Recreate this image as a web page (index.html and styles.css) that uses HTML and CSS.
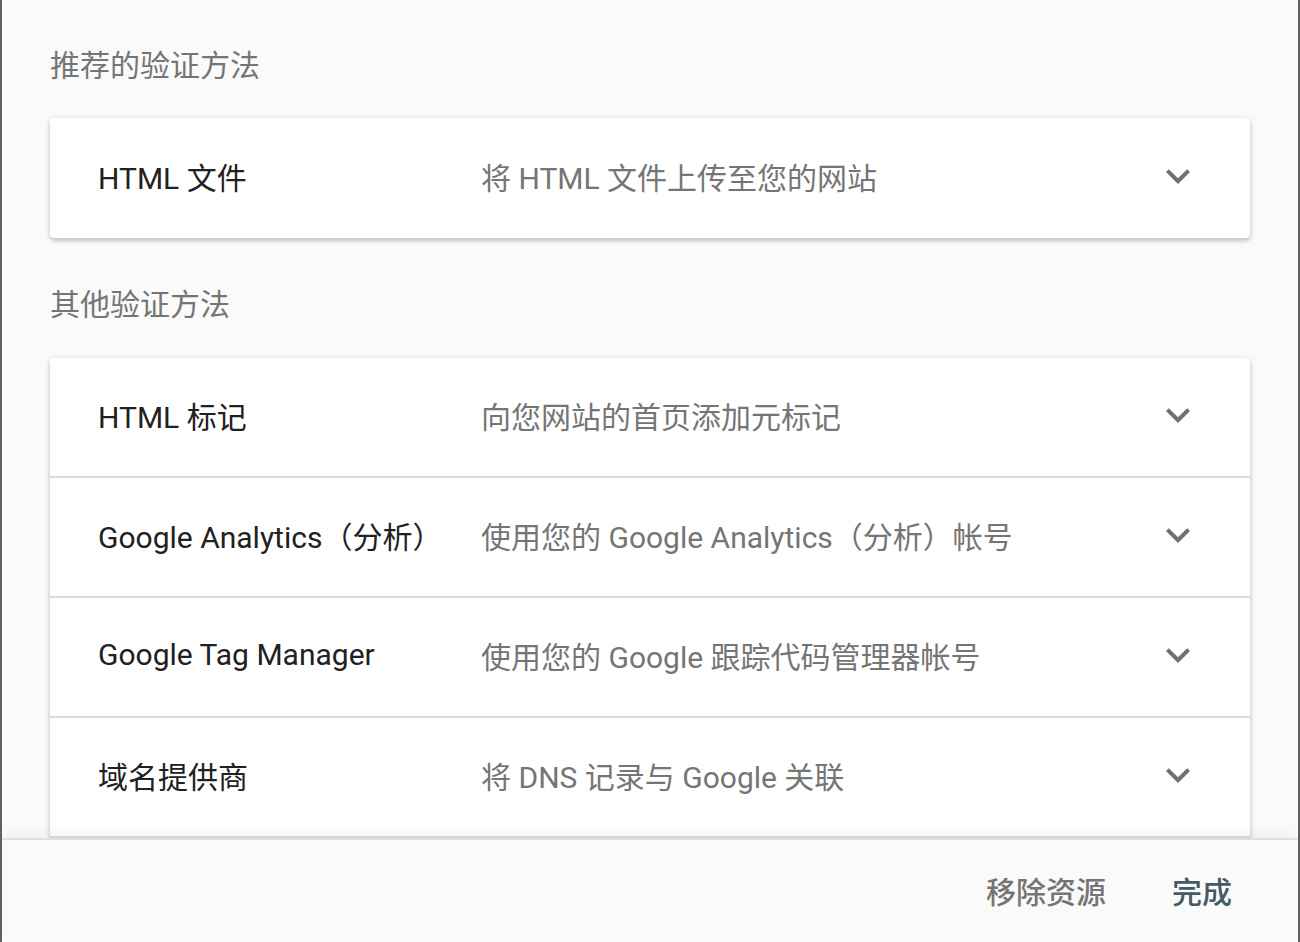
FILE: index.html
```html
<!DOCTYPE html>
<html lang="zh-CN">
<head>
<meta charset="utf-8">
<title>验证方法</title>
<link rel="stylesheet" href="styles.css">
</head>
<body>
<div class="dialog">
  <div class="content">
    <h2 class="section-title">推荐的验证方法</h2>
    <div class="card">
      <div class="row">
        <span class="title">HTML 文件</span>
        <span class="desc">将 HTML 文件上传至您的网站</span>
        <svg class="chev" viewBox="0 0 24 24"><path d="M16.59 8.59L12 13.17 7.41 8.59 6 10l6 6 6-6z"/></svg>
      </div>
    </div>
    <h2 class="section-title second">其他验证方法</h2>
    <div class="card">
      <div class="row bordered">
        <span class="title">HTML 标记</span>
        <span class="desc">向您网站的首页添加元标记</span>
        <svg class="chev" viewBox="0 0 24 24"><path d="M16.59 8.59L12 13.17 7.41 8.59 6 10l6 6 6-6z"/></svg>
      </div>
      <div class="row bordered">
        <span class="title">Google Analytics（分析）</span>
        <span class="desc">使用您的 Google Analytics（分析）帐号</span>
        <svg class="chev" viewBox="0 0 24 24"><path d="M16.59 8.59L12 13.17 7.41 8.59 6 10l6 6 6-6z"/></svg>
      </div>
      <div class="row bordered">
        <span class="title">Google Tag Manager</span>
        <span class="desc">使用您的 Google 跟踪代码管理器帐号</span>
        <svg class="chev" viewBox="0 0 24 24"><path d="M16.59 8.59L12 13.17 7.41 8.59 6 10l6 6 6-6z"/></svg>
      </div>
      <div class="row bordered">
        <span class="title">域名提供商</span>
        <span class="desc">将 DNS 记录与 Google 关联</span>
        <svg class="chev" viewBox="0 0 24 24"><path d="M16.59 8.59L12 13.17 7.41 8.59 6 10l6 6 6-6z"/></svg>
      </div>
    </div>
  </div>
  <div class="footer">
    <button class="btn btn-remove">移除资源</button>
    <button class="btn btn-done">完成</button>
  </div>
</div>
</body>
</html>
```

FILE: styles.css
```css
html, body {
  margin: 0;
  padding: 0;
}
body {
  background: #626262;
  font-family: Roboto, "Noto Sans CJK SC", "Noto Sans", sans-serif;
  -webkit-font-smoothing: antialiased;
}
.dialog {
  margin: 0 2px;
  height: 942px;
  background: #fafafa;
  display: flex;
  flex-direction: column;
}
.content {
  height: 838px;
  overflow: hidden;
  padding: 0 48px;
}
.section-title {
  margin: 46px 0 32px 0;
  font-size: 30px;
  line-height: 40px;
  font-weight: 400;
  color: #757575;
}
.section-title.second {
  margin-top: 47px;
  margin-bottom: 33px;
}
.card {
  background: #fff;
  border-radius: 4px;
  box-shadow: 0 3px 4px rgba(0, 0, 0, 0.16), 0 1px 6px rgba(0, 0, 0, 0.12);
}
.row {
  display: grid;
  grid-template-columns: 383px 1fr 48px;
  align-items: center;
  height: 120px;
  padding: 0 48px 0 48px;
  box-sizing: border-box;
  font-size: 30px;
}
.row.bordered {
  border-bottom: 2px solid #dadada;
}
.title {
  color: #212121;
  white-space: nowrap;
  margin-bottom: 5px;
}
.desc {
  color: #757575;
  white-space: nowrap;
  margin-bottom: 5px;
}
.chev {
  width: 48px;
  height: 48px;
  fill: #707070;
  margin-bottom: 4px;
}
.footer {
  position: relative;
  z-index: 1;
  flex: 1;
  border-top: 2px solid #e0e0e0;
  box-shadow: 0 -4px 14px rgba(0, 0, 0, 0.05);
  background: #fafafa;
  display: flex;
  justify-content: flex-end;
  align-items: center;
  gap: 34px;
  padding-right: 50px;
  padding-top: 4px;
}
.btn {
  font-family: Roboto, "Noto Sans CJK SC", sans-serif;
  font-size: 30px;
  font-weight: 500;
  background: none;
  border: none;
  padding: 0 16px;
  line-height: 72px;
  cursor: pointer;
}
.btn-remove {
  color: #757575;
}
.btn-done {
  color: #455a64;
}
```
